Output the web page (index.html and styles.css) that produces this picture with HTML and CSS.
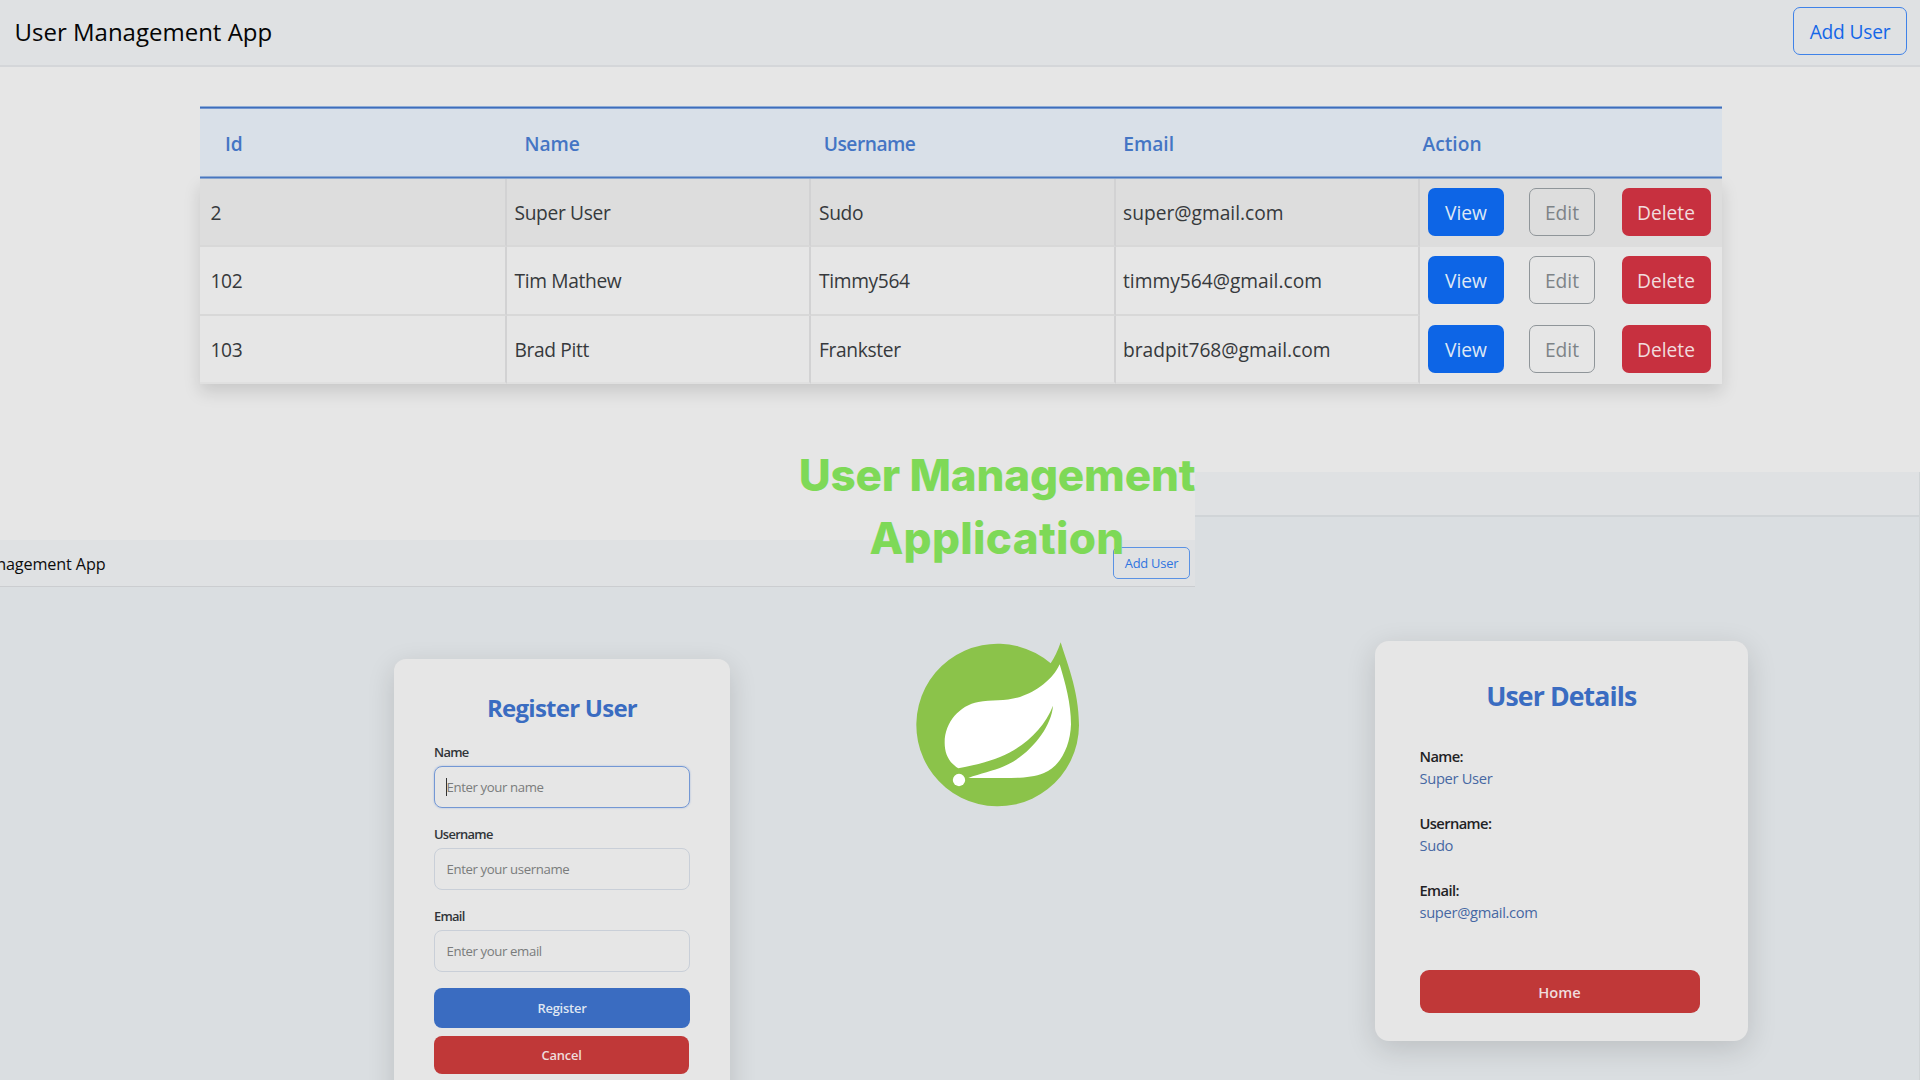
FILE: index.html
```html
<!DOCTYPE html>
<html lang="en">
<head>
<meta charset="utf-8">
<title>User Management App</title>
<link rel="stylesheet" href="styles.css">
</head>
<body>
<main class="collage">
  <section class="window users">
    <header class="navbar">
      <span class="brand">User Management App</span>
      <a class="btn btn-add">Add User</a>
    </header>
    <div class="table">
      <div class="thead">
        <span>Id</span><span>Name</span><span class="wide">Username</span><span>Email</span><span>Action</span>
      </div>
      <div class="tbody">
        <div class="row striped">
          <div class="cell">2</div>
          <div class="cell">Super User</div>
          <div class="cell">Sudo</div>
          <div class="cell mail">super@gmail.com</div>
          <div class="actions"><a class="btn view">View</a><a class="btn edit">Edit</a><a class="btn delete">Delete</a></div>
        </div>
        <div class="row">
          <div class="cell">102</div>
          <div class="cell">Tim Mathew</div>
          <div class="cell">Timmy564</div>
          <div class="cell mail">timmy564@gmail.com</div>
          <div class="actions"><a class="btn view">View</a><a class="btn edit">Edit</a><a class="btn delete">Delete</a></div>
        </div>
        <div class="row">
          <div class="cell">103</div>
          <div class="cell">Brad Pitt</div>
          <div class="cell">Frankster</div>
          <div class="cell mail">bradpit768@gmail.com</div>
          <div class="actions"><a class="btn view">View</a><a class="btn edit">Edit</a><a class="btn delete">Delete</a></div>
        </div>
      </div>
    </div>
  </section>

  <section class="window details">
    <div class="details-bar"></div>
    <div class="details-card">
      <h2>User Details</h2>
      <dl>
        <dt>Name:</dt><dd>Super User</dd>
        <dt>Username:</dt><dd>Sudo</dd>
        <dt>Email:</dt><dd>super@gmail.com</dd>
      </dl>
      <a class="home">Home</a>
    </div>
  </section>

  <section class="window register">
    <header class="register-bar">
      <span class="register-brand">User Management App</span>
      <a class="btn-add-small">Add User</a>
    </header>
    <form class="register-card">
      <h2>Register User</h2>
      <label>Name</label>
      <div class="field focused"><i class="caret"></i>Enter your name</div>
      <label>Username</label>
      <div class="field">Enter your username</div>
      <label>Email</label>
      <div class="field">Enter your email</div>
      <a class="submit">Register</a>
      <a class="cancel">Cancel</a>
    </form>
  </section>

  <h1 class="title">User Management<br><span class="title-second">Application</span></h1>
  <svg class="logo" viewBox="0 0 600 600">
    <path fill="#8bc34a" d="M482 67 C497 118 537 210 537 316 A244 244 0 1 1 452 130 Q470 103 482 67 Z"/>
    <path fill="#fff" d="M479 133 C496 190 513 250 513 313 C511 380 480 440 432 459 C392 475 350 474 290 474 L205 474 C240 461 280 453 312 439 C386 407 454 325 459 257 C432 327 370 382 300 411 C262 426 215 438 175 445 C146 427 134 400 134 368 C134 306 180 256 235 246 C275 239 320 244 360 231 C409 215 459 178 479 133 Z"/>
    <circle cx="177" cy="480" r="18.500" fill="#fff"/>
  </svg>
</main>
</body>
</html>
```
FILE: styles.css
```css
* { box-sizing: border-box; }

body {
  margin: 0;
  font-family: "Open Sans", "Noto Sans", sans-serif;
  background: #e6e6e6;
}

.collage {
  position: relative;
  width: 1920px;
  height: 1080px;
  overflow: hidden;
}

.window { position: absolute; overflow: hidden; }

/* Users list */
.users { left: 0; top: 0; width: 1920px; height: 540px; background: #e6e6e6; }

.navbar {
  display: flex;
  justify-content: space-between;
  align-items: flex-start;
  height: 67px;
  padding: 7px 13px 0 14.500px;
  background: #dfe1e3;
  border-bottom: 2px solid #d4d6d9;
}

.brand { font-size: 24px; line-height: 49px; color: #050505; }

.btn {
  display: flex;
  justify-content: center;
  height: 48px;
  border: 1.5px solid transparent;
  border-radius: 7px;
  font-size: 19.200px;
  line-height: 47px;
}

.btn-add {
  width: 114px;
  line-height: 47px;
  border-color: #3f82e8;
  color: #1467e8;
  letter-spacing: -0.2px;
}

.table { width: 1522px; margin: 39px 0 0 200px; }

.thead {
  display: grid;
  grid-template-columns: repeat(5, 299.400px);
  height: 73px;
  padding: 3px 0 3px 25px;
  font-size: 19.200px;
  line-height: 70px;
  font-weight: 600;
  color: #4475c4;
  background:
    linear-gradient(#8eacd6 1px, #3e6dbb 1px 2px, #7497d0 2px) top / 100% 3px no-repeat,
    linear-gradient(#8eacd6 1px, #4a78c2 1px 2px, #8eacd6 2px) bottom / 100% 3px no-repeat,
    #d9e0e8;
}

.thead .wide { letter-spacing: -0.5px; }

.tbody { box-shadow: 0 8px 16px rgba(0, 0, 0, 0.13); }

.row {
  display: grid;
  grid-template-columns: 306.500px repeat(3, 304.500px) 1fr;
  grid-template-rows: 68.300px;
  background: #e6e6e6;
}

.row.striped { background: #dddddd; }

.cell {
  padding-left: 8px;
  font-size: 19.200px;
  line-height: 68.500px;
  height: 68.300px;
  color: #36393c;
  letter-spacing: -0.35px;
  border-right: 2px solid #d2d2d3;
  border-bottom: 2px solid #d8d8d8;
}

.cell:first-child { padding-left: 10.500px; }

.row:last-child .cell { border-bottom-color: #e0e0e0; }

.cell.mail { padding-left: 7.500px; letter-spacing: 0; }

.actions { display: flex; padding: 9.200px 11.500px 0 8px; }

.view { width: 76px; margin-right: 25px; background: #0d65e6; color: #dfe8f5; }
.edit { width: 66px; margin-right: 26.500px; border-color: #8f9599; color: #7d8387; }
.delete { width: 89px; background: #c7303f; color: #f1dcde; }

/* User details */
.details { left: 1195px; top: 472px; width: 725px; height: 608px; background: #dadee1; border-right: 1px solid #d0d4d6; }

.details-bar { height: 45px; background: #dfe1e3; border-bottom: 2px solid #d0d4d7; }

.details-card {
  width: 373px;
  height: 400px;
  margin: 124px 0 0 180px;
  padding: 37px 48px 0 44.500px;
  border-radius: 14px;
  background: #e6e6e6;
  box-shadow: 0 8px 30px rgba(0, 0, 0, 0.14);
}

h2 { margin: 0; font-weight: 700; color: #3a6cc1; text-align: center; }

.details-card h2 { margin-left: -3px; margin-right: -6px; font-size: 26.700px; line-height: 36px; letter-spacing: -0.9px; }

dl { margin: 31px 0 0; font-size: 14.700px; line-height: 22px; }
dt { font-weight: 600; color: #1f2225; letter-spacing: -0.6px; }
dd { margin: 0 0 23px; color: #4668a3; letter-spacing: -0.32px; }

.home {
  display: block;
  width: 280px;
  height: 43px;
  margin-top: 47px;
  border-radius: 9px;
  background: #c03838;
  color: #efdcdc;
  font-size: 14.700px;
  font-weight: 600;
  line-height: 45px;
  text-align: center;
}

/* Registration form */
.register { left: 0; top: 540px; width: 1195px; height: 540px; background: #dadee1; }

.register-bar {
  display: flex;
  justify-content: flex-end;
  align-items: flex-start;
  height: 47px;
  padding: 7px 5px 0 0;
  background: #dfe1e3;
  border-bottom: 1px solid #cbcdd0;
}

.register-brand {
  margin-right: auto;
  margin-left: -66px;
  font-size: 16.200px;
  line-height: 34px;
  color: #0c0c0c;
  letter-spacing: -0.12px;
  white-space: nowrap;
}

.btn-add-small {
  width: 77px;
  height: 32px;
  border: 1px solid #5a92e4;
  border-radius: 5px;
  color: #2f74e0;
  font-size: 12.900px;
  line-height: 31px;
  letter-spacing: -0.25px;
  text-align: center;
}

.register-card {
  width: 336px;
  height: 460px;
  margin: 72px 0 0 394px;
  padding: 32px 40px 0;
  border-radius: 12px;
  background: #e6e6e6;
  box-shadow: 0 8px 28px rgba(0, 0, 0, 0.14);
}

.register-card h2 { margin-bottom: 17px; font-size: 24px; line-height: 34px; letter-spacing: -0.75px; }

label {
  display: block;
  height: 24px;
  font-size: 12.900px;
  line-height: 20px;
  font-weight: 600;
  color: #303438;
  letter-spacing: -0.7px;
}

.field {
  position: relative;
  height: 42px;
  margin-bottom: 16px;
  padding-left: 11.500px;
  border: 1px solid #c9cfd8;
  border-radius: 8px;
  font-size: 13.200px;
  line-height: 41px;
  color: #7a7c7c;
  letter-spacing: -0.38px;
}

.field.focused { border: 1.500px solid #7397d4; box-shadow: 0 0 2px #9fb6dc; }

.caret { position: absolute; left: 11px; top: 11px; width: 1px; height: 18px; background: #333; }

.submit, .cancel {
  display: block;
  border-radius: 8px;
  font-size: 12.900px;
  font-weight: 600;
  text-align: center;
  letter-spacing: -0.2px;
}

.submit { height: 40px; background: #3a6cc1; color: #dfe6f2; line-height: 41px; }
.cancel { width: 255px; height: 38px; margin-top: 7.500px; background: #c03838; color: #efdcdc; line-height: 39px; }

/* Overlay */
.title {
  position: absolute;
  left: 697px;
  top: 443.500px;
  width: 600px;
  margin: 0;
  font: 800 44px/63px Inter, sans-serif;
  letter-spacing: -0.2px;
  text-align: center;
  color: #7ed957;
}

.title-second { letter-spacing: 0.3px; }

.logo { position: absolute; left: 900px; top: 620px; width: 200px; height: 200px; }
```
